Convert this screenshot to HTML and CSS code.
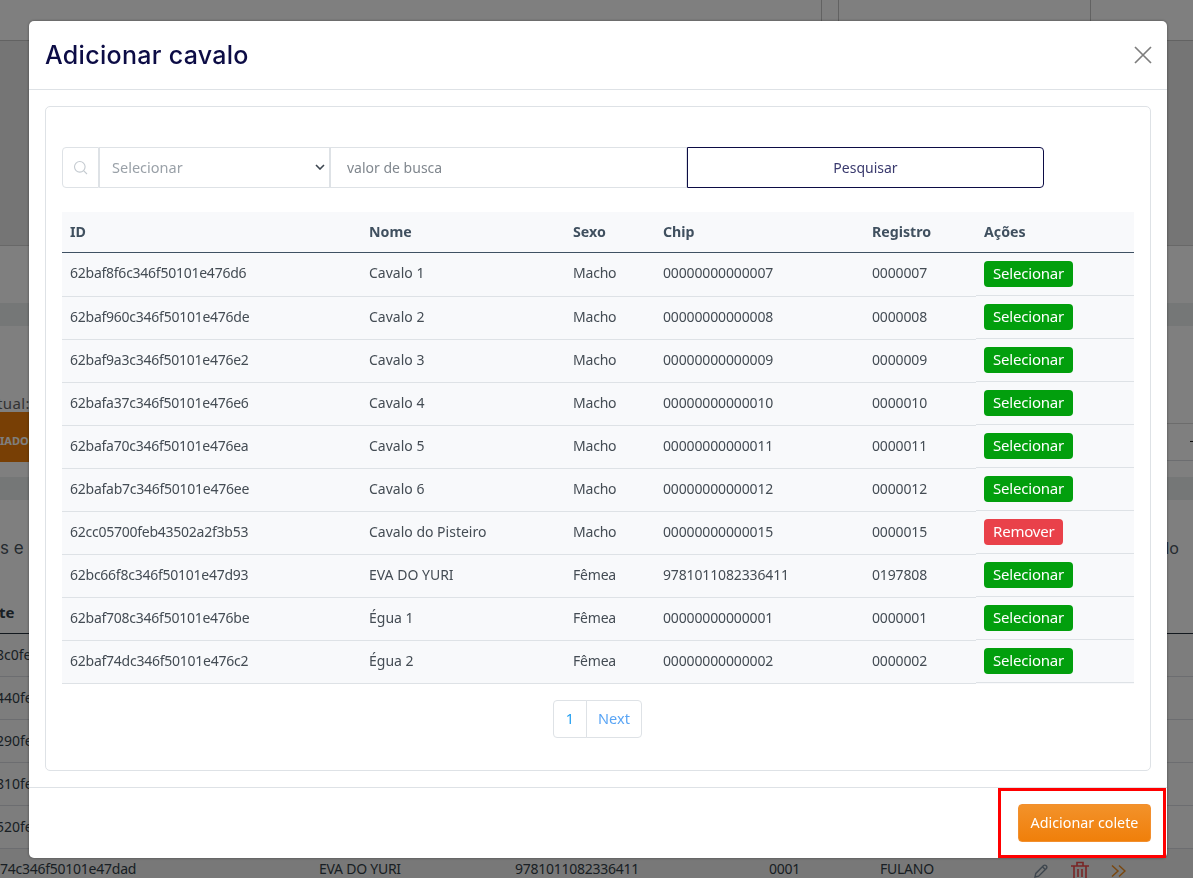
FILE: index.html
```html
<!DOCTYPE html>
<html lang="pt">
<head>
<meta charset="utf-8">
<title>Adicionar cavalo</title>
<link rel="stylesheet" href="styles.css">
</head>
<body>
<div class="page">
  <div class="page-top"><i class="c1"></i><i class="c2"></i><i class="c3"></i></div>
  <div class="page-blank1"></div>
  <div class="page-line"></div>
  <div class="page-blank2"></div>
  <div class="page-band"></div>
  <div class="status-head">tual:</div>
  <div class="status-row"><span class="status-badge">IADO</span><span class="status-mark"></span></div>
  <div class="page-band second"></div>
  <div class="section-title"><span>s e c</span><span>lo</span></div>
  <div class="bg-head">te</div>
  <div class="bg-row">8c0fe</div>
  <div class="bg-row">440fe</div>
  <div class="bg-row">290fe</div>
  <div class="bg-row">810fe</div>
  <div class="bg-row">520fe</div>
  <div class="bg-row last">
    <span class="b-id">74c346f50101e47dad</span>
    <span class="b-name">EVA DO YURI</span>
    <span class="b-chip">9781011082336411</span>
    <span class="b-reg">0001</span>
    <span class="b-owner">FULANO</span>
    <span class="b-icons">
      <svg width="16" height="16" viewBox="0 0 16 16" fill="none" stroke="#7c8c9c" stroke-width="1.4"><path d="M2 14l.8-3.6L10.6 2.6a1.6 1.6 0 0 1 2.3 0l.5.5a1.6 1.6 0 0 1 0 2.3L5.6 13.2z"/><path d="M9.4 3.8l2.8 2.8"/></svg>
      <svg width="20" height="20" viewBox="0 0 20 20" fill="none" stroke="#f24a4a" stroke-width="1.6"><path d="M1 5h18M4 5v14h12V5M7 5V1.5h6V5M8 8v8M12 8v8"/></svg>
      <svg width="15" height="14" viewBox="0 0 15 14" fill="none" stroke="#f28f20" stroke-width="1.5"><path d="M1 1.5l6 5.5-6 5.5M8 1.5l6 5.5-6 5.5"/></svg>
    </span>
  </div>
</div>

<div class="backdrop"></div>
<div class="modal">
  <header class="modal-header">
    <h2 class="modal-title">Adicionar cavalo</h2>
    <svg class="close" width="18" height="18" viewBox="0 0 18 18" fill="none" stroke="#7d7d7d" stroke-width="1.7"><path d="M1 1l16 16M17 1L1 17"/></svg>
  </header>
  <div class="modal-body">
    <div class="card">
      <form class="search">
        <span class="search-icon"><svg width="15" height="15" viewBox="0 0 15 15" fill="none" stroke="#c4cad0" stroke-width="1.1"><circle cx="6.8" cy="6.8" r="5.3"/><path d="M10.8 10.8l3.2 3.2"/></svg></span>
        <span class="search-select"><span class="select-label">Selecionar</span><svg width="10" height="6" viewBox="0 0 10 6" fill="none" stroke="#3d4650" stroke-width="1.6"><path d="M1 1l4 4 4-4"/></svg></span>
        <span class="search-input">valor de busca</span>
        <button type="button" class="search-btn">Pesquisar</button>
      </form>
      <table class="grid">
        <thead>
          <tr><th class="w-id">ID</th><th class="w-name">Nome</th><th class="w-sex">Sexo</th><th class="w-chip">Chip</th><th class="w-reg">Registro</th><th>Ações</th></tr>
        </thead>
        <tbody>
          <tr><td>62baf8f6c346f50101e476d6</td><td>Cavalo 1</td><td>Macho</td><td>00000000000007</td><td>0000007</td><td class="act"><a class="tag ok">Selecionar</a></td></tr>
          <tr><td>62baf960c346f50101e476de</td><td>Cavalo 2</td><td>Macho</td><td>00000000000008</td><td>0000008</td><td class="act"><a class="tag ok">Selecionar</a></td></tr>
          <tr><td>62baf9a3c346f50101e476e2</td><td>Cavalo 3</td><td>Macho</td><td>00000000000009</td><td>0000009</td><td class="act"><a class="tag ok">Selecionar</a></td></tr>
          <tr><td>62bafa37c346f50101e476e6</td><td>Cavalo 4</td><td>Macho</td><td>00000000000010</td><td>0000010</td><td class="act"><a class="tag ok">Selecionar</a></td></tr>
          <tr><td>62bafa70c346f50101e476ea</td><td>Cavalo 5</td><td>Macho</td><td>00000000000011</td><td>0000011</td><td class="act"><a class="tag ok">Selecionar</a></td></tr>
          <tr><td>62bafab7c346f50101e476ee</td><td>Cavalo 6</td><td>Macho</td><td>00000000000012</td><td>0000012</td><td class="act"><a class="tag ok">Selecionar</a></td></tr>
          <tr><td>62cc05700feb43502a2f3b53</td><td>Cavalo do Pisteiro</td><td>Macho</td><td>00000000000015</td><td>0000015</td><td class="act"><a class="tag rm">Remover</a></td></tr>
          <tr><td>62bc66f8c346f50101e47d93</td><td>EVA DO YURI</td><td>Fêmea</td><td>9781011082336411</td><td>0197808</td><td class="act"><a class="tag ok">Selecionar</a></td></tr>
          <tr><td>62baf708c346f50101e476be</td><td>Égua 1</td><td>Fêmea</td><td>00000000000001</td><td>0000001</td><td class="act"><a class="tag ok">Selecionar</a></td></tr>
          <tr><td>62baf74dc346f50101e476c2</td><td>Égua 2</td><td>Fêmea</td><td>00000000000002</td><td>0000002</td><td class="act"><a class="tag ok">Selecionar</a></td></tr>
        </tbody>
      </table>
      <nav class="pager"><a class="pg one">1</a><a class="pg next">Next</a></nav>
    </div>
  </div>
  <footer class="modal-footer">
    <button type="button" class="add-btn">Adicionar colete</button>
    <span class="highlight"></span>
  </footer>
</div>
</body>
</html>
```
FILE: styles.css
```css
* { box-sizing: border-box; }
html, body { margin: 0; height: 100%; }
body {
  overflow: hidden;
  font-family: "Noto Sans", "Open Sans", "Liberation Sans", sans-serif;
  font-size: 14px;
  color: #333f48;
  background: #fff;
}
.page { height: 878px; overflow: hidden; background: #fff; }
.page-top { height: 41px; border-bottom: 1px solid #c4c4c4; display: flex; }
.page-top i { display: block; height: 100%; border-left: 1px solid #c4c4c4; }
.page-top .c1 { margin-left: 821px; width: 17px; }
.page-top .c2 { width: 252px; }
.page-top .c3 { width: 0; }
.page-blank1 { height: 204px; background: #eaeaea; }
.page-line { height: 1px; background: #d0d0d0; }
.page-blank2 { height: 57px; }
.page-band { height: 23px; background: #eaeeee; }
.status-head { height: 98px; padding-top: 65px; margin-left: -3px; line-height: 24px; font-size: 15px; color: #666; letter-spacing: .4px; border-bottom: 1px solid #d8d8d8; white-space: nowrap; }
.status-row { height: 37px; display: flex; justify-content: space-between; border-bottom: 1px solid #d8dbe0; }
.status-badge { display: block; width: 29px; height: 50px; background: #f07f0a; margin-top: -12px; color: #fff; font-size: 11px; font-weight: 700; line-height: 58px; text-align: right; padding-right: 3px; overflow: hidden; position: relative; }
.status-mark { width: 3px; height: 1px; margin-top: 17px; background: #222; }
.page-band.second { margin-top: 16px; }
.section-title { height: 88px; display: flex; justify-content: space-between; padding: 36px 14px 0 0; font-size: 16px; color: #4a5560; line-height: 24px; }
.section-title span:first-child { font-family: Inter, sans-serif; font-size: 17px; }
.bg-head { height: 46px; font-weight: 700; font-size: 15px; padding-top: 12px; margin-left: -1px; line-height: 24px; border-bottom: 1px solid #24303c; }
.bg-row { height: 43px; line-height: 41px; margin-left: -4px; border-bottom: 1px solid #d8dbe0; white-space: nowrap; background: #fafafa; }
.bg-row.last { display: flex; margin-left: 0; line-height: 26px; height: 40px; padding-top: 7px; background: #f0f0f0; letter-spacing: -.25px; }
.b-id { width: 319px; flex: none; }
.b-name { width: 196px; flex: none; }
.b-chip { width: 254px; flex: none; }
.b-reg { width: 111px; flex: none; }
.b-owner { width: 153px; flex: none; }
.b-icons { display: flex; gap: 21px; align-items: center; height: 22px; margin-top: 4px; }

.backdrop { position: fixed; inset: 0; background: rgba(0, 0, 0, .5); }
.modal {
  position: fixed;
  left: 29px;
  top: 21px;
  width: 1138px;
  height: 837px;
  background: #fff;
  border-radius: 5px;
  display: flex;
  flex-direction: column;
  box-shadow: 0 0 3px rgba(0, 0, 0, .4);
}
.modal-header { height: 69px; flex: none; display: flex; align-items: center; justify-content: space-between; padding: 0 15px 0 16px; border-bottom: 1px solid #dee2e6; }
.modal-title { margin: 0; font: 500 25px/32px Inter, "Noto Sans", sans-serif; letter-spacing: .3px; color: #0c0c45; }
.modal-body { flex: 1; padding: 16px; }
.card { height: 100%; border: 1px solid #dee2e6; border-radius: 5px; padding: 40px 16px 0; }
.search { display: flex; width: 982px; height: 41px; }
.search-icon { width: 37px; flex: none; display: flex; align-items: center; justify-content: center; border: 1px solid #dee2e6; border-radius: 4px 0 0 4px; }
.search-select { width: 231px; flex: none; display: flex; align-items: center; justify-content: space-between; padding: 0 4px 1px 12px; border: 1px solid #dee2e6; color: #9aa1a8; }
.select-label { font-size: 14.5px; }
.search-input { width: 357px; flex: none; display: flex; align-items: center; padding: 0 0 0 16px; border: 1px solid #dee2e6; color: #80878e; }
.search-btn { flex: 1; font: inherit; background: #fff; color: #3a3a6e; border: 1px solid #0c0c45; border-radius: 0 4px 4px 0; padding: 0; }
.grid { width: 100%; margin-top: 24px; border-collapse: separate; border-spacing: 0; table-layout: fixed; }
.grid th { height: 41px; background: #f8f9fb; text-align: left; padding: 0 8px 1px; font-weight: 700; font-size: 14.2px; color: #40505f; border-bottom: 1px solid #3f5163; }
.grid td { height: 43px; background: #f8f9fb; padding: 0 8px 3px; color: #444c54; border-bottom: 1px solid #dee2e6; white-space: nowrap; }
.grid tbody tr:first-child td { height: 44px; padding-bottom: 4px; }
.grid td:nth-child(1) { letter-spacing: -.25px; }
.grid td:nth-child(3) { letter-spacing: -.2px; }
.grid td:nth-child(4) { letter-spacing: -.14px; }
.grid td:nth-child(5) { letter-spacing: -.15px; }
.grid td.act, .grid tbody tr:first-child td.act { padding: 0 8px 3px; border-bottom: 0; background: linear-gradient(to top, #f8f9fb 1px, #dee2e6 1px, #dee2e6 2px, #f8f9fb 2px); }
.grid tbody tr:first-child td.act { padding-bottom: 2px; }
.w-id { width: 299px; }
.w-name { width: 204px; }
.w-sex { width: 90px; }
.w-chip { width: 209px; }
.w-reg { width: 112px; }
.tag { display: inline-block; height: 26px; line-height: 24px; padding: 0 9px; border-radius: 4px; color: #fff; font-size: 15px; letter-spacing: -.2px; vertical-align: middle; }
.tag.ok { background: #029f0d; }
.tag.rm { background: #e9414a; }
.pager { display: flex; justify-content: center; margin-top: 16px; margin-left: -1px; }
.pg { height: 38px; line-height: 35px; border: 1px solid #dee2e6; text-align: center; font-size: 14.5px; }
.pg.one { width: 34px; color: #1e9df0; border-radius: 4px 0 0 4px; }
.pg.next { width: 56px; margin-left: -1px; color: #5aa5f5; border-radius: 0 4px 4px 0; }
.modal-footer { height: 71px; flex: none; border-top: 1px solid #dee2e6; display: flex; align-items: center; justify-content: flex-end; padding: 0 16px; position: relative; }
.add-btn { width: 133px; height: 38px; border: 1px solid #f28f2e; border-radius: 4px; background: linear-gradient(#f3922a, #f07f0a); color: #fff; font: inherit; font-size: 14.3px; padding: 0 0 2px; }
.highlight { position: absolute; right: 1px; bottom: 0; width: 168px; height: 70px; border: 3px solid #ff0000; }
```
